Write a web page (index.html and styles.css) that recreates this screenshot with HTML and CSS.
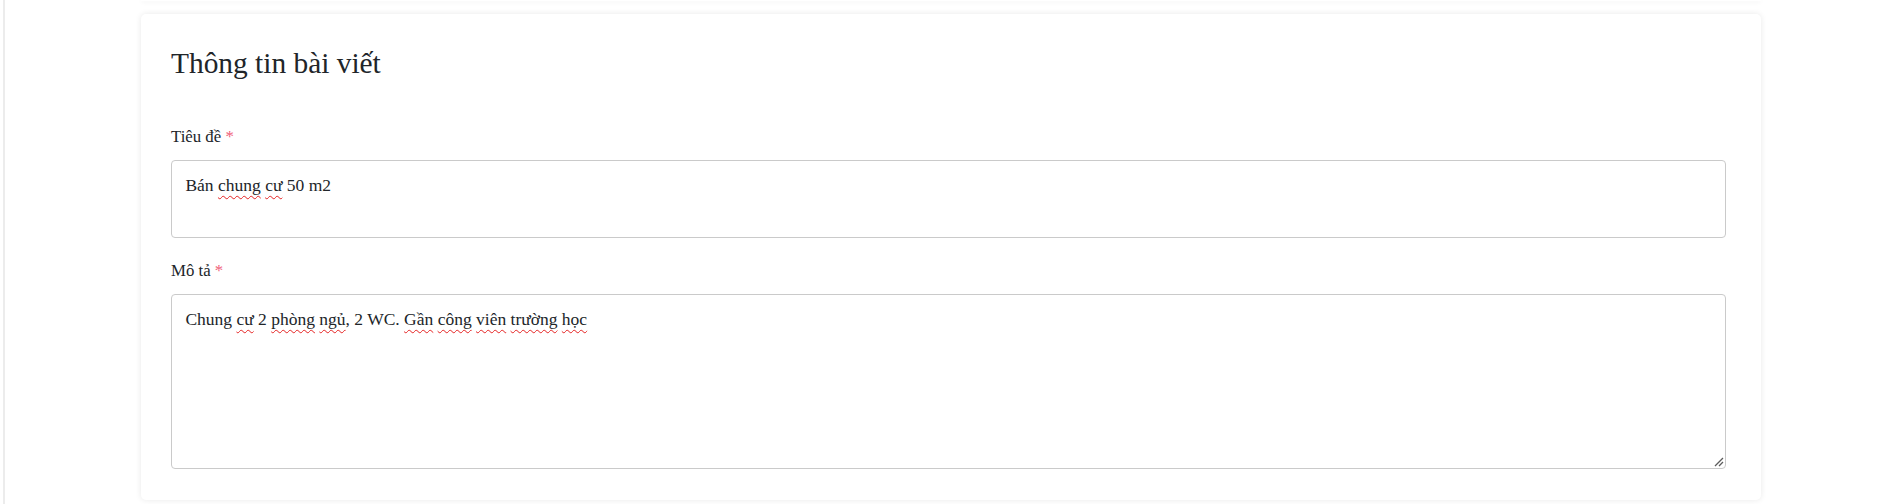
FILE: index.html
```html
<!DOCTYPE html>
<html lang="vi">
<head>
<meta charset="utf-8">
<title>Thông tin bài viết</title>
<link rel="stylesheet" href="styles.css">
</head>
<body>
<div class="layout">
  <div class="edge"></div>
  <main class="main">
    <div class="card card-prev"></div>
    <section class="card">
      <h3 class="card-title">Thông tin bài viết</h3>
      <div class="field">
        <label class="label">Tiêu đề <span class="req">*</span></label>
        <div class="control control-title" role="textbox">Bán <span class="sp">chung</span> <span class="sp">cư</span> 50 m2</div>
      </div>
      <div class="field">
        <label class="label">Mô tả <span class="req">*</span></label>
        <div class="control control-desc" role="textbox">Chung <span class="sp">cư</span> 2 <span class="sp">phòng</span> <span class="sp">ngủ</span>, 2 WC. <span class="sp">Gần</span> <span class="sp">công</span> <span class="sp">viên</span> <span class="sp">trường</span> <span class="sp">học</span><svg class="grip" width="10" height="10" viewBox="0 0 10 10"><path d="M1 9 L9 1 M5 9 L9 5" stroke="#5c5c5c" stroke-width="1.3" fill="none"/></svg></div>
      </div>
    </section>
  </main>
</div>
</body>
</html>
```
FILE: styles.css
```css
html, body {
  margin: 0;
  padding: 0;
  background: #fff;
}
body {
  font-family: "Liberation Serif", "Times New Roman", serif;
  font-size: 16.8px;
  line-height: 1.5;
  color: #212529;
}
.layout {
  display: flex;
  height: 504px;
  overflow: hidden;
}
.edge {
  width: 3px;
  flex: 0 0 3px;
  border-right: 2px solid #ececec;
}
.main {
  flex: 1;
  padding: 0 130px 0 136px;
}
.card {
  background: #fff;
  border-radius: 5px;
  box-shadow: 0 0 6px rgba(0, 0, 0, 0.09);
  padding: 31.8px 35px 31px 30px;
}
.card-prev {
  height: 1px;
  padding: 0;
  border-radius: 0 0 5px 5px;
  box-shadow: 0 1px 4px rgba(0, 0, 0, 0.1);
  margin-bottom: 13px;
}
.card-title {
  margin: 0 0 43.2px;
  font-size: 29.4px;
  font-weight: 400;
  line-height: 1.2;
}
.field + .field {
  margin-top: 20.6px;
}
.label {
  display: block;
  line-height: 25.2px;
  margin-bottom: 10.2px;
}
.req {
  color: #f0607a;
}
.control {
  position: relative;
  box-sizing: border-box;
  border: 1px solid #cacaca;
  border-radius: 4px;
  padding: 12.6px 12.6px 12.6px 13.4px;
  font-size: 17.5px;
  line-height: 25.2px;
  color: #212529;
  background: #fff;
}
.control-title {
  height: 78px;
}
.control-desc {
  height: 175px;
}
.sp {
  text-decoration: underline wavy #e52222;
  text-decoration-thickness: 1px;
  text-underline-offset: 3.5px;
  text-decoration-skip-ink: none;
}
.grip {
  position: absolute;
  right: 1px;
  bottom: 1px;
}
```
